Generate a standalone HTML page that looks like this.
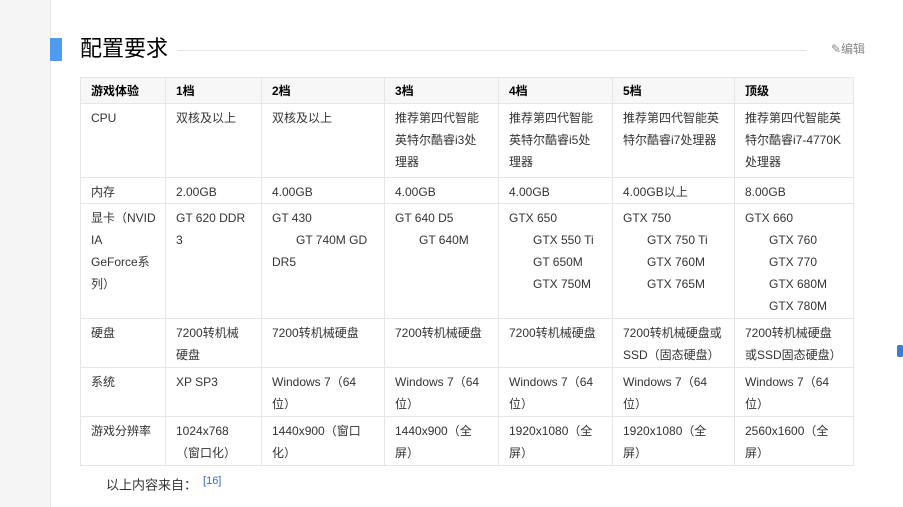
<!DOCTYPE html>
<html><head><meta charset="utf-8"><style>
body{margin:0;width:903px;height:507px;background:#fff;position:relative;overflow:hidden;font-family:"Liberation Sans","Noto Sans CJK SC",sans-serif;color:#333}
.side{position:absolute;left:0;top:0;width:50px;height:507px;background:#f5f5f5;border-right:1px solid #e8e8e8}
.bar{position:absolute;left:50px;top:38px;width:12px;height:23px;background:#4f9cee}
h2{position:absolute;left:80px;top:34px;margin:0;font-weight:normal;font-size:22px;line-height:30px;color:#000}
.line{position:absolute;left:177px;top:50px;width:630px;height:1px;background:#e5e5e5}
.edit{position:absolute;left:831px;top:40px;font-size:12px;color:#888;line-height:18px}
table{position:absolute;left:80px;top:77px;border-collapse:collapse;table-layout:fixed;font-size:12px;line-height:22px}
td{border:1px solid #e6e6e6;vertical-align:top;padding:3px 0 0 10px;color:#333;white-space:nowrap;overflow:hidden}
tr.h td{background:#f7f7f7;font-weight:bold;color:#000;padding:2px 0 1px 10px}
.i{padding-left:24px}
.src{position:absolute;left:106px;top:468px;font-size:13px;color:#333;line-height:26px}
.src sup{color:#3366cc;font-size:11px;margin-left:6px}
.rt{position:absolute;left:897px;top:345px;width:6px;height:12px;background:#3a7bd5;border-radius:2px}
</style></head><body>
<div class="side"></div>
<div class="bar"></div>
<h2>配置要求</h2>
<div class="line"></div>
<div class="edit">✎编辑</div>
<table>
<colgroup><col style="width:85px"><col style="width:96px"><col style="width:123px"><col style="width:114px"><col style="width:114px"><col style="width:122px"><col style="width:119px"></colgroup>
<tr class="h" style="height:26px"><td>游戏体验</td><td>1档</td><td>2档</td><td>3档</td><td>4档</td><td>5档</td><td>顶级</td></tr>
<tr style="height:74px"><td>CPU</td><td>双核及以上</td><td>双核及以上</td><td>推荐第四代智能<br>英特尔酷睿i3处<br>理器</td><td>推荐第四代智能<br>英特尔酷睿i5处<br>理器</td><td>推荐第四代智能英<br>特尔酷睿i7处理器</td><td>推荐第四代智能英<br>特尔酷睿i7-4770K<br>处理器</td></tr>
<tr style="height:26px"><td>内存</td><td>2.00GB</td><td>4.00GB</td><td>4.00GB</td><td>4.00GB</td><td>4.00GB以上</td><td>8.00GB</td></tr>
<tr style="height:115px"><td>显卡（NVID<br>IA<br>GeForce系<br>列）</td><td>GT 620 DDR<br>3</td><td>GT 430<br><span class="i">GT 740M GD</span><br>DR5</td><td>GT 640 D5<br><span class="i">GT 640M</span></td><td>GTX 650<br><span class="i">GTX 550 Ti</span><br><span class="i">GT 650M</span><br><span class="i">GTX 750M</span></td><td>GTX 750<br><span class="i">GTX 750 Ti</span><br><span class="i">GTX 760M</span><br><span class="i">GTX 765M</span></td><td>GTX 660<br><span class="i">GTX 760</span><br><span class="i">GTX 770</span><br><span class="i">GTX 680M</span><br><span class="i">GTX 780M</span></td></tr>
<tr style="height:49px"><td>硬盘</td><td>7200转机械<br>硬盘</td><td>7200转机械硬盘</td><td>7200转机械硬盘</td><td>7200转机械硬盘</td><td>7200转机械硬盘或<br>SSD（固态硬盘）</td><td>7200转机械硬盘<br>或SSD固态硬盘）</td></tr>
<tr style="height:49px"><td>系统</td><td>XP SP3</td><td>Windows 7（64<br>位）</td><td>Windows 7（64<br>位）</td><td>Windows 7（64<br>位）</td><td>Windows 7（64<br>位）</td><td>Windows 7（64<br>位）</td></tr>
<tr style="height:49px"><td>游戏分辨率</td><td>1024x768<br>（窗口化）</td><td>1440x900（窗口<br>化）</td><td>1440x900（全<br>屏）</td><td>1920x1080（全<br>屏）</td><td>1920x1080（全<br>屏）</td><td>2560x1600（全<br>屏）</td></tr>
</table>
<div class="src">以上内容来自：<sup>[16]</sup></div>
<div class="rt"></div>
</body></html>
